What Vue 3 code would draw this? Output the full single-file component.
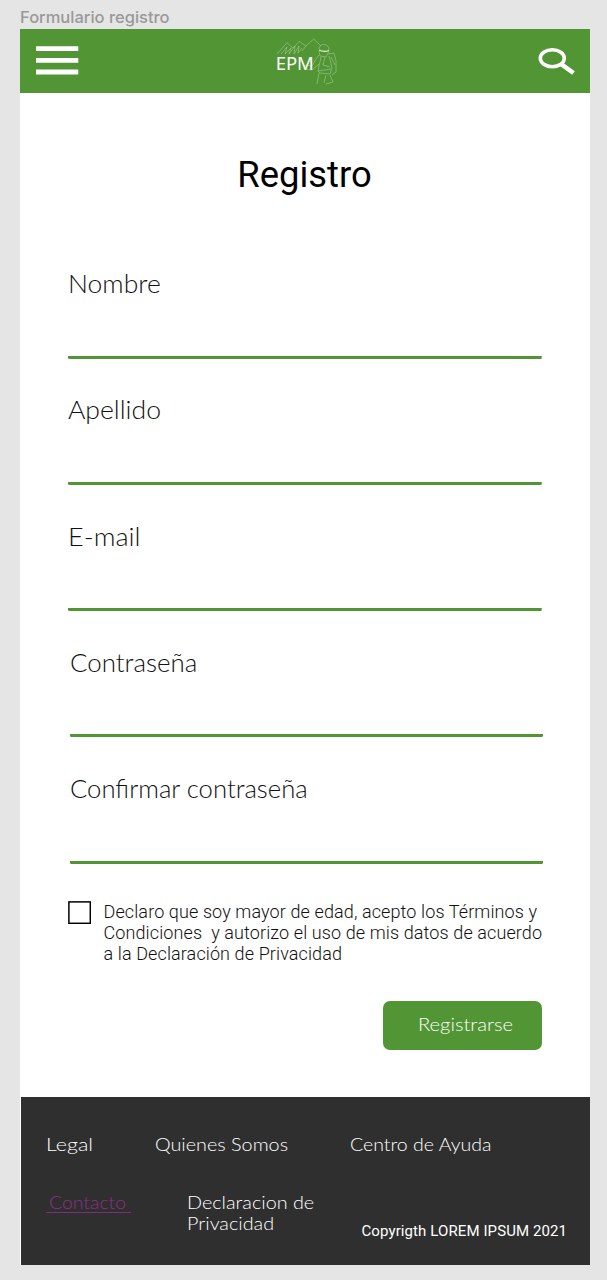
<script setup>
const fields = [
  { id: 'nombre', label: 'Nombre', type: 'text' },
  { id: 'apellido', label: 'Apellido', type: 'text' },
  { id: 'email', label: 'E-mail', type: 'email' },
  { id: 'clave', label: 'Contraseña', type: 'password', shifted: true },
  { id: 'confirmar', label: 'Confirmar contraseña', type: 'password', shifted: true },
]
</script>

<template>
  <div class="canvas">
    <div class="frame-name">Formulario registro</div>
    <div class="frame">
      <header class="bar">
        <svg class="menu" width="43" height="30" viewBox="0 0 43 30">
          <path d="M0 3.6H42.3M0 15.3H42.3M0 27H42.3" stroke="#fff" stroke-width="4.8" />
        </svg>
        <svg class="logo" width="64" height="48" viewBox="0 0 64 48">
          <g fill="none" stroke="#d3e8c6" stroke-width=".6" stroke-linejoin="round" opacity=".65">
            <path d="M1 16L11 4.7L15 8.5L17 10L23.3 3.3L27 6L30 8L37.7 1L45 8" />
            <path d="M5 16L11 9L9 16L15 10L13 16L19 8L18 16L23 8L22 15L26 10M30 8L26 13" />
            <path d="M43 11C43 5.5 51 5 53 10L52 12M43 13L44 18L50 19L53 13" />
            <path d="M43 17L40 21L36 28L29 27L28 31L36 32L43 26M45 19L42 33L44 35L54 36L56 30L53 18M52 16L58 15L60 23L60 34L56 37M49 19L47 27L54 29M55 19L59 27M43 35L41 46M50 37L48 45M54 37L57 44L50 46M42 33L55 31" />
          </g>
          <path d="M43 12Q48 14.5 53 12.5" fill="none" stroke="#e2f0da" stroke-width="1.1" />
          <text x="-.2" y="32" class="logo-text" textLength="38">EPM</text>
        </svg>
        <svg class="search" width="38" height="30" viewBox="0 0 38 30">
          <ellipse cx="14.3" cy="11.2" rx="12" ry="8.5" fill="none" stroke="#fff" stroke-width="3.6" />
          <path d="M23.2 17.2L35.5 26" stroke="#fff" stroke-width="4.5" />
        </svg>
      </header>

      <main>
        <h1>Registro</h1>
        <form @submit.prevent>
          <div v-for="f in fields" :key="f.id" class="field" :class="[f.id, { shifted: f.shifted }]">
            <label :for="f.id"><span>{{ f.label }}</span></label>
            <input :id="f.id" :type="f.type" />
          </div>
          <div class="consent">
            <svg class="box" width="23" height="23" viewBox="0 0 23 23">
              <rect x=".9" y=".9" width="21.4" height="21.4" fill="none" stroke="#000" stroke-width="1.5" />
            </svg>
            <p>Declaro que soy mayor de edad, acepto los Términos y<br>Condiciones&nbsp; y autorizo el uso de mis datos de acuerdo<br>a la Declaración de Privacidad</p>
          </div>
          <button type="submit"><span>Registrarse</span></button>
        </form>
      </main>

      <footer>
        <nav class="row first">
          <a class="legal"><span>Legal</span></a>
          <a class="about"><span>Quienes Somos</span></a>
          <a class="help"><span>Centro de Ayuda</span></a>
        </nav>
        <div class="row second">
          <a class="contact"><span>Contacto</span></a>
          <a class="privacy"><span>Declaracion de<br>Privacidad</span></a>
          <small>Copyrigth LOREM IPSUM 2021</small>
        </div>
      </footer>
    </div>
  </div>
</template>

<style>
body { background: #e5e5e5; }
</style>

<style scoped>
* { box-sizing: border-box; }
.canvas { width: 607px; height: 1280px; padding: 7px 0 0 20px; background: #e5e5e5; font-family: Lato, sans-serif; overflow: hidden; }
.frame-name { height: 22px; font: 500 16.5px/21px Inter, sans-serif; color: #999; white-space: nowrap; }
.frame { width: 570px; height: 1236px; background: #fff; display: flex; flex-direction: column; }
.bar { height: 64px; background: #519534; display: flex; align-items: flex-start; flex: none; }
.menu { margin: 16px 0 0 16px; }
.logo { margin: 9px 0 0 197px; }
.logo-text { font: 400 18.5px "Noto Sans", sans-serif; fill: #fff; }
.search { margin: 18px 0 0 198px; }
main { height: 1004px; padding: 60px 47px 0 48px; flex: none; }
h1 { margin: 0; font: 400 36.4px/44px Roboto, sans-serif; color: #000; text-align: center; padding-right: 2px; }
form { padding-top: 70px; display: flex; flex-direction: column; }
.field { width: 473.5px; height: 126.25px; color: #111; }
.field.shifted { margin-left: 1.5px; }
label { display: block; height: 32px; font-size: 25px; font-weight: 300; line-height: 32px; white-space: nowrap; }
label span, button span, footer span { display: inline-block; transform-origin: 0 50%; }
.nombre span { transform: scaleX(1.06); }
.apellido span { transform: scaleX(1.063); }
.email span { transform: scaleX(1.08); }
.clave span { transform: scaleX(1.035); }
.confirmar span { transform: scaleX(1.026); }
input { display: block; width: 100%; height: 59.5px; border: 0; padding: 0; outline: 0; background: linear-gradient(#519534, #519534) bottom / 100% 3px no-repeat; border-radius: 1.5px; }
.consent { display: flex; gap: 12.5px; margin-top: 3px; }
.box { flex: none; }
p { margin: 0; font: 300 18px/21.1px Roboto, sans-serif; letter-spacing: .11px; color: #111; white-space: nowrap; }
button { align-self: flex-end; width: 159px; height: 48.5px; margin-top: 36.7px; margin-right: 1.5px; padding: 0 0 3px 35px; border: 0; border-radius: 7px; background: #519534; color: #fff; font: 300 18px Lato, sans-serif; text-align: left; }
button span { transform: scaleX(1.12); }
footer { margin-left: 1px; height: 168px; background: #2f2f2f; color: #fff; padding: 37px 0 0 25px; font-size: 18px; line-height: 21px; white-space: nowrap; font-weight: 300; }
.row { display: flex; align-items: flex-start; }
.first { height: 58px; }
.legal { width: 109px; }
.legal span { transform: scaleX(1.19); }
.about { width: 195px; }
.about span { transform: scaleX(1.1); }
.help span { transform: scaleX(1.085); }
.contact { width: 85px; height: 21px; padding-left: 3px; margin-right: 56px; color: #8d2f88; border-bottom: 1.5px solid #812b7c; }
.contact span { transform: scaleX(1.08); }
.privacy { width: 174.5px; }
.privacy span { transform: scaleX(1.1); }
small { font: 400 15px/20px Roboto, sans-serif; letter-spacing: .1px; color: #fff; margin-top: 29px; }
</style>
